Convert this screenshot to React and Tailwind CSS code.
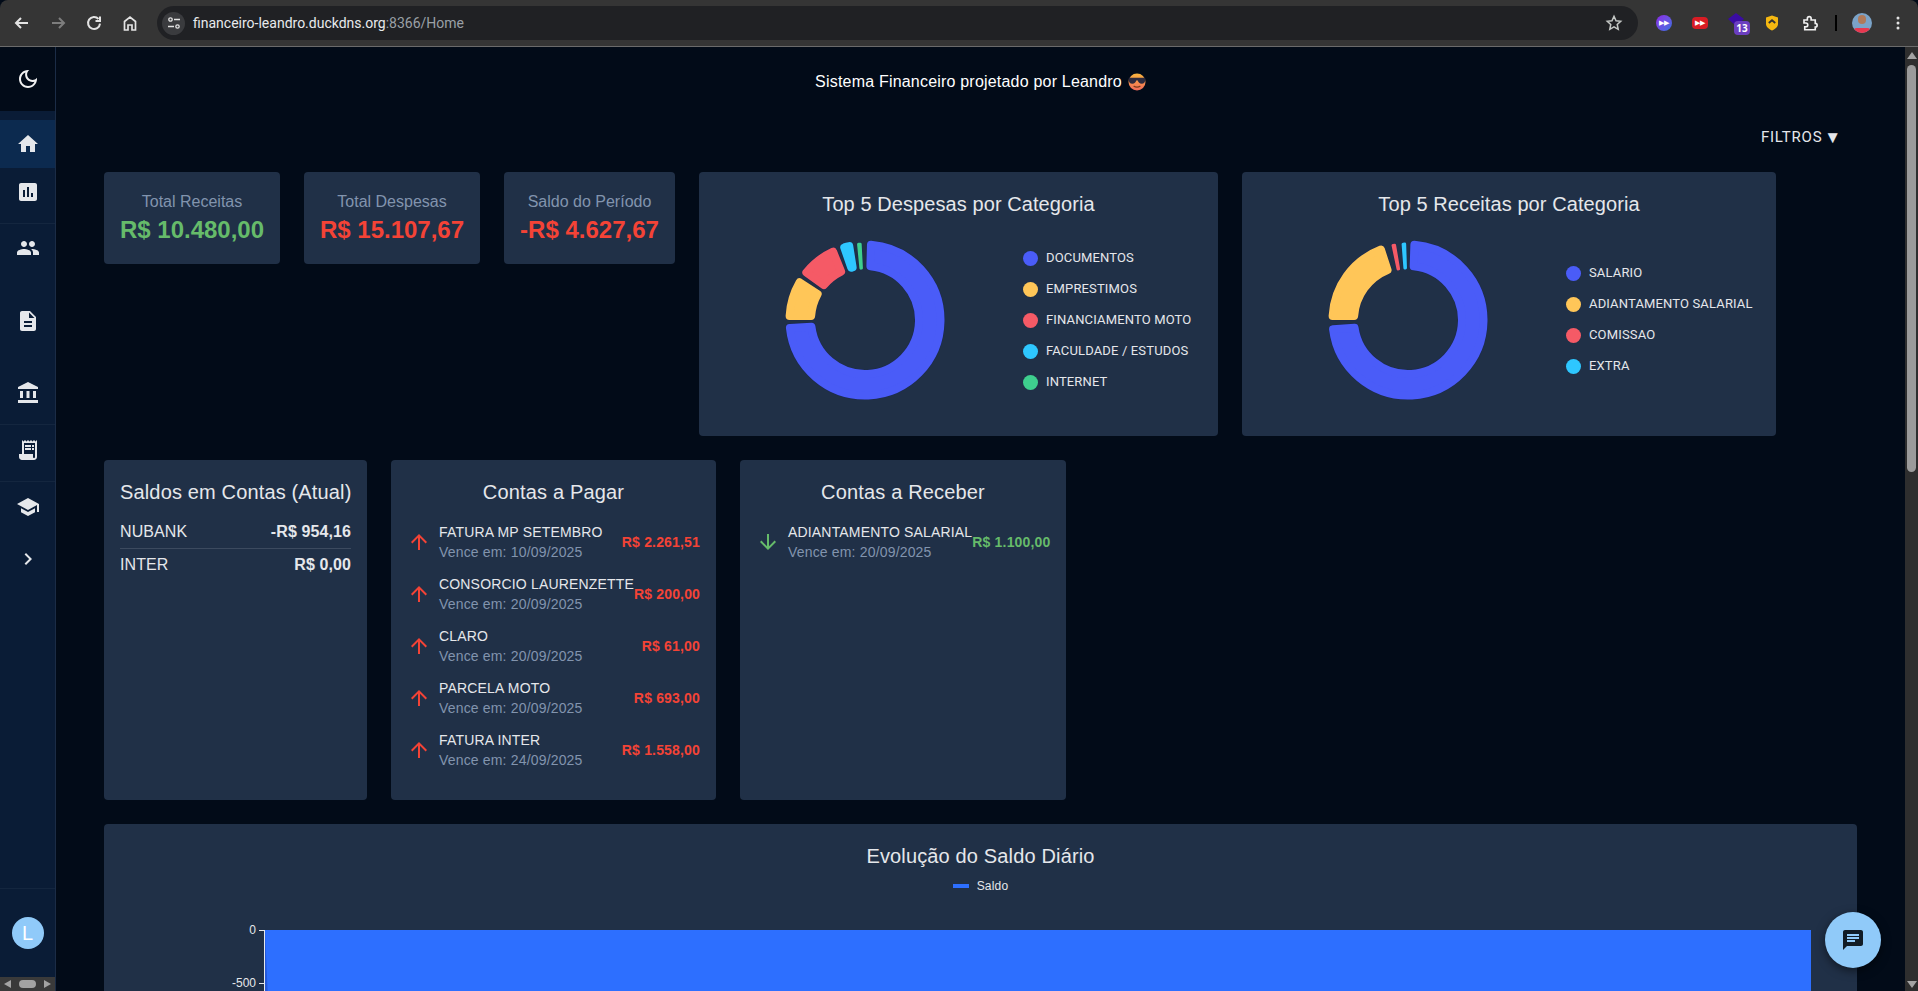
import React from "react";

const arial = { fontFamily: '"Liberation Sans", Arial, sans-serif' };

function P(r, a) {
  const t = ((a - 90) * Math.PI) / 180;
  return [r * Math.cos(t), r * Math.sin(t)];
}
function sector(rO, rI, a0, a1) {
  const c = 4;
  const ro = rO - c, ri = rI + c;
  const dO = (c / ro) * 57.3, dI = (c / ri) * 57.3;
  const mid = (a0 + a1) / 2;
  const s0 = Math.min(a0 + dO, mid), s1 = Math.max(a1 - dO, mid);
  const i0 = Math.min(a0 + dI, mid), i1 = Math.max(a1 - dI, mid);
  const [x1, y1] = P(ro, s0), [x2, y2] = P(ro, s1), [x3, y3] = P(ri, i1), [x4, y4] = P(ri, i0);
  const big = s1 - s0 > 180 ? 1 : 0, bigI = i1 - i0 > 180 ? 1 : 0;
  return `M${x1} ${y1}A${ro} ${ro} 0 ${big} 1 ${x2} ${y2}L${x3} ${y3}A${ri} ${ri} 0 ${bigI} 0 ${x4} ${y4}Z`;
}

function Donut({ segs }) {
  return (
    <svg width="162" height="162" viewBox="-81 -81 162 162" className="shrink-0">
      {segs.map(([a0, a1, c], i) => {
        const thin = a1 - a0 < 6;
        const d = thin
          ? `M${P(76, (a0 + a1) / 2 - 0.6).join(" ")}L${P(76, (a0 + a1) / 2 + 0.6).join(" ")}L${P(52, (a0 + a1) / 2 + 0.3).join(" ")}L${P(52, (a0 + a1) / 2 - 0.3).join(" ")}Z`
          : sector(79.5, 50, a0, a1);
        const w = thin ? 3 : 8;
        return (
          <g key={i}>
            <path d={d} fill="#1c2a4f" stroke="#1c2a4f" strokeWidth={w + 1} strokeLinejoin="round" />
            <path d={d} fill={c} stroke={c} strokeWidth={w} strokeLinejoin="round" />
          </g>
        );
      })}
    </svg>
  );
}

const BLUE = "#4a5cf8", YEL = "#ffc658", RED = "#f55a66", CY = "#2ec7ff", GR = "#3ecf8e";

function Legend({ items }) {
  return (
    <div className="flex flex-col gap-[11px]" style={{ fontFamily: "Roboto, sans-serif" }}>
      {items.map(([t, c]) => (
        <div key={t} className="flex h-5 items-center text-[13px] font-normal tracking-[0.15px] text-[#e5e7eb] whitespace-nowrap">
          <span className="mr-2 h-[15px] w-[15px] rounded-full" style={{ background: c }} />
          {t}
        </div>
      ))}
    </div>
  );
}

function Stat({ label, value, color, w }) {
  return (
    <div className={`flex h-[92px] flex-col items-center justify-center rounded bg-[#203047] ${w}`}>
      <div className="text-base leading-6 text-[#8294ae]">{label}</div>
      <div className={`text-2xl font-bold leading-8 ${color}`}>{value}</div>
    </div>
  );
}

const Arrow = ({ down }) => (
  <svg width="24" height="24" viewBox="0 0 24 24" className={down ? "shrink-0 fill-[#66bb6a]" : "shrink-0 fill-[#f44336]"}>
    {down ? (
      <path d="m20 12-1.41-1.41L13 16.17V4h-2v12.17l-5.58-5.59L4 12l8 8z" />
    ) : (
      <path d="m4 12 1.41 1.41L11 7.83V20h2V7.83l5.58 5.59L20 12l-8-8z" />
    )}
  </svg>
);

function Bill({ name, due, value, down }) {
  return (
    <div className="flex h-[52px] items-center tracking-[0.17px]">
      <div className="w-8 shrink-0">
        <Arrow down={down} />
      </div>
      <div className="flex-1 whitespace-nowrap text-sm leading-5">
        <div className="text-[#e5e7eb]">{name}</div>
        <div className="text-[#8294ae]">Vence em: {due}</div>
      </div>
      <div className={`whitespace-nowrap text-sm font-bold ${down ? "text-[#66bb6a]" : "text-[#f44336]"}`}>{value}</div>
    </div>
  );
}

const Mui = ({ d, className = "" }) => (
  <svg width="24" height="24" viewBox="0 0 24 24" className={`fill-[#e5e7eb] ${className}`}>
    <path d={d} />
  </svg>
);

const icons = {
  home: "M10 20v-6h4v6h5v-8h3L12 3 2 12h3v8z",
  chart: "M19 3H5c-1.1 0-2 .9-2 2v14c0 1.1.9 2 2 2h14c1.1 0 2-.9 2-2V5c0-1.1-.9-2-2-2M9 17H7v-7h2zm4 0h-2V7h2zm4 0h-2v-4h2z",
  people: "M16 11c1.66 0 2.99-1.34 2.99-3S17.66 5 16 5s-3 1.34-3 3 1.34 3 3 3m-8 0c1.66 0 2.99-1.34 2.99-3S9.66 5 8 5 5 6.34 5 8s1.34 3 3 3m0 2c-2.33 0-7 1.17-7 3.5V19h14v-2.5c0-2.33-4.67-3.5-7-3.5m8 0c-.29 0-.62.02-.97.05 1.16.84 1.97 1.97 1.97 3.45V19h6v-2.5c0-2.33-4.67-3.5-7-3.5",
  doc: "M14 2H6c-1.1 0-1.99.9-1.99 2L4 20c0 1.1.89 2 1.99 2H18c1.1 0 2-.9 2-2V8zm2 16H8v-2h8zm0-4H8v-2h8zm-3-5V3.5L18.5 9z",
  bank: "M4 10h3v7H4zm6.5 0h3v7h-3zM2 19h20v3H2zm15-9h3v7h-3zm-5-9L2 6v2h20V6z",
  receipt: "M19.5 3.5 18 2l-1.5 1.5L15 2l-1.5 1.5L12 2l-1.5 1.5L9 2 7.5 3.5 6 2v14H3v3c0 1.66 1.34 3 3 3h12c1.66 0 3-1.34 3-3V2zM19 19c0 .55-.45 1-1 1s-1-.45-1-1v-3H8V5h11zM9 7h6v2H9zm7 0h2v2h-2zm-7 3h6v2H9zm7 0h2v2h-2z",
  school: "M5 13.18v4L12 21l7-3.82v-4L12 17zM12 3 1 9l11 6 9-4.91V17h2V9z",
  chevron: "M10 6 8.59 7.41 13.17 12l-4.58 4.59L10 18l6-6z",
  chat: "M20 2H4c-1.1 0-1.99.9-1.99 2L2 22l4-4h14c1.1 0 2-.9 2-2V4c0-1.1-.9-2-2-2M6 9h12v2H6zm8 5H6v-2h8zm4-6H6V6h12z",
  moon: "M9.37 5.51c-.18.64-.27 1.31-.27 1.99 0 4.08 3.32 7.4 7.4 7.4.68 0 1.35-.09 1.99-.27C17.45 17.19 14.93 19 12 19c-3.86 0-7-3.14-7-7 0-2.93 1.81-5.45 4.37-6.49M12 3c-4.97 0-9 4.03-9 9s4.03 9 9 9 9-4.03 9-9c0-.46-.04-.92-.1-1.36-.98 1.37-2.58 2.26-4.4 2.26-2.98 0-5.4-2.42-5.4-5.4 0-1.81.89-3.42 2.26-4.4-.44-.06-.9-.1-1.36-.1",
};

function NavItem({ icon, h, active, divider }) {
  return (
    <div className={`flex shrink-0 items-center justify-center ${h} ${active ? "bg-[#0c2a4f]" : ""} ${divider ? "border-b border-[#14263f]" : ""}`}>
      <Mui d={icons[icon]} />
    </div>
  );
}

function Toolbar() {
  return (
    <div className="flex h-[47px] shrink-0 items-center rounded-t-[8px] border-b border-[#6b6b6b] bg-[#353535]">
      <svg width="157" height="24" viewBox="0 0 157 24" fill="none" strokeWidth="2" className="shrink-0">
        <path d="M28 12H16m5-5-5 5 5 5" stroke="#e3e3e3" />
        <path d="M52 12h12m-5-5 5 5-5 5" stroke="#7d7d7d" />
        <path d="M98.500 8A6 6 0 1 0 100 12.600" stroke="#e3e3e3" />
        <path d="M100 5.500V10h-4.500" stroke="#e3e3e3" />
        <path d="M124.500 19v-8.500L130 6l5.500 4.500V19h-3.500v-5h-4v5z" stroke="#e3e3e3" strokeWidth="1.700" />
      </svg>
      <div className="flex h-[34px] flex-1 items-center rounded-full bg-[#202124] pl-[5px] pr-[15px]">
        <div className="flex h-[23px] w-[23px] items-center justify-center rounded-full bg-[#3a3b3e]">
          <svg width="14" height="14" viewBox="0 0 14 14" fill="none" stroke="#e3e3e3" strokeWidth="1.300">
            <circle cx="3.500" cy="3.500" r="1.700" />
            <path d="M7 3.500h6M1 10.500h6" />
            <circle cx="10.500" cy="10.500" r="1.700" />
          </svg>
        </div>
        <div className="ml-[8px] flex-1 text-sm text-[#e8eaed]" style={{ fontFamily: "Roboto, sans-serif" }}>
          financeiro-leandro.duckdns.org<span className="text-[#9aa0a6]">:8366/Home</span>
        </div>
        <svg width="18" height="18" viewBox="0 0 24 24" fill="none" stroke="#c4c7c5" strokeWidth="2">
          <path d="m12 3 2.700 6 6.300.7-4.700 4.300 1.300 6.400L12 17.100l-5.600 3.300 1.300-6.400L3 9.700 9.300 9z" />
        </svg>
      </div>
      <div className="flex w-[280px] shrink-0 items-center" style={{ fontFamily: '"Noto Sans", sans-serif' }}>
        <span className="ml-[18px] flex h-4 w-4 items-center justify-center rounded-full bg-gradient-to-br from-[#8a1ee6] to-[#2b6fe0] text-[7px] text-white">▶▶</span>
        <span className="ml-[20px] flex h-3 w-4 items-center justify-center rounded bg-[#d81c24] text-[7px] text-white">▶▶</span>
        <span className="relative ml-[20px] h-4 w-[22px] -translate-y-[2px]">
          <svg width="16" height="14" viewBox="0 0 16 14" className="absolute left-0 top-0"><path d="M8 0l8 6-8 7-8-7z" fill="#3a0ca3" /></svg>
          <span className="absolute left-[6px] top-[8px] flex h-[14px] w-4 items-center justify-center rounded bg-[#6b3ec0] text-[10px] font-bold text-white">13</span>
        </span>
        <svg width="12" height="16" viewBox="0 0 13 16" className="ml-[16px]">
          <path d="M6.500 0 13 2v7c0 3-3 5.500-6.500 7C3 14.500 0 12 0 9V2z" fill="#f5b811" />
          <path d="M3 8l3.500-3L10 8" stroke="#333" strokeWidth="2" fill="none" />
        </svg>
        <svg width="18" height="18" viewBox="0 0 24 24" fill="none" stroke="#f1f1f1" strokeWidth="2.200" className="ml-[23px]">
          <path d="M4 8h4.500V6a2.500 2.500 0 0 1 5 0v2H19v4.500a2.500 2.500 0 0 1 0 5V21H5v-4h1.500a2.500 2.500 0 0 0 0-5H4z" />
        </svg>
        <span className="ml-[16px] h-4 w-[2px] bg-black" />
        <span className="relative ml-[15px] h-5 w-5 overflow-hidden rounded-full bg-[#7ba3c8]">
          <span className="absolute left-[6px] top-[2px] h-[9px] w-2 rounded-full bg-[#b07a5a]" />
          <span className="absolute bottom-[-3px] left-[1px] h-2 w-[18px] rounded-full bg-[#e8384f]" />
        </span>
        <svg width="4" height="14" viewBox="0 0 4 14" fill="#e3e3e3" className="ml-[24px]">
          <circle cx="2" cy="2" r="1.500" /><circle cx="2" cy="7" r="1.500" /><circle cx="2" cy="12" r="1.500" />
        </svg>
      </div>
    </div>
  );
}

function Emoji() {
  return (
    <svg width="18" height="18" viewBox="0 0 18 18" className="ml-[6px] inline-block align-[-4px]">
      <defs>
        <linearGradient id="emj" x1="0" y1="0" x2="0" y2="1">
          <stop offset="0" stopColor="#f9b53e" />
          <stop offset="1" stopColor="#f26a5a" />
        </linearGradient>
      </defs>
      <circle cx="9" cy="9" r="8.500" fill="url(#emj)" />
      <path d="M0.800 4.800h16.400v2c0 2.400-1.300 4-3.400 4S10.200 9.500 9.800 7.600h-1.600c-.4 1.900-1.600 3.200-3.900 3.200S0.800 9.200 0.800 6.800z" fill="#2d2a3e" />
      <path d="M6 13.300c1.500 1.200 4.500 1.200 6 0" stroke="#7a3b1c" strokeWidth="1.200" fill="none" strokeLinecap="round" />
    </svg>
  );
}

export default function App() {
  return (
    <div className="flex h-[991px] w-[1918px] flex-col overflow-hidden bg-[#020b18]" style={arial}>
      <Toolbar />
      <div className="flex min-h-0 flex-1">
        <aside className="flex w-[56px] shrink-0 flex-col border-r border-[#1b2c46] bg-[#0a1c36]">
          <div className="flex h-[64px] shrink-0 items-center justify-center bg-[#020b18]">
            <svg width="24" height="24" viewBox="0 0 24 24" fill="#f2f2f2"><path d={icons.moon} /></svg>
          </div>
          <div className="h-[9px] shrink-0" />
          <NavItem icon="home" h="h-[48px]" active />
          <NavItem icon="chart" h="h-[56px] pb-2" divider />
          <NavItem icon="people" h="h-[48px]" />
          <NavItem icon="doc" h="h-[96px] pt-[2px]" />
          <NavItem icon="bank" h="h-[57px] pb-[7px]" divider />
          <NavItem icon="receipt" h="h-[57px] pb-[7px]" divider />
          <NavItem icon="school" h="h-[50px]" />
          <NavItem icon="chevron" h="h-[54px]" />
          <div className="flex-1 border-b border-[#14263f]" />
          <div className="flex h-[88px] shrink-0 items-start justify-center pt-[28px]">
            <div className="flex h-8 w-8 items-center justify-center rounded-full bg-[#90caf9] text-xl text-white">L</div>
          </div>
          <div className="flex h-[14px] shrink-0 items-center justify-between bg-[#3a3a3a] px-1">
            <span className="h-0 w-0 border-y-[4px] border-r-[7px] border-y-transparent border-r-[#a3a3a3]" />
            <span className="h-2 w-[17px] rounded-full bg-[#a3a3a3]" />
            <span className="h-0 w-0 border-y-[4px] border-l-[7px] border-y-transparent border-l-[#a3a3a3]" />
          </div>
        </aside>

        <main className="relative min-w-0 flex-1 overflow-hidden pl-[48px]">
          <div className="flex h-[70px] items-center justify-center text-base tracking-[0.2px] text-white">
            <span className="ml-[-48px]">Sistema Financeiro projetado por Leandro<Emoji /></span>
          </div>
          <div className="flex h-[55px] items-center justify-end pb-[15px] pr-[63px] text-[15px] tracking-[0.8px] text-[#e5e7eb]" style={{ fontFamily: "Roboto, sans-serif" }}>
            FILTROS<span className="ml-[2px] text-[17px] leading-none">▼</span>
          </div>

          <div className="flex items-start gap-6">
            <Stat label="Total Receitas" value="R$ 10.480,00" color="text-[#66bb6a]" w="w-[176px]" />
            <Stat label="Total Despesas" value="R$ 15.107,67" color="text-[#f44336]" w="w-[176px]" />
            <Stat label="Saldo do Período" value="-R$ 4.627,67" color="text-[#f44336]" w="w-[171px]" />
            <section className="h-[264px] w-[519px] rounded bg-[#203047] pt-4 text-[#e5e7eb]">
              <h2 className="text-center text-xl leading-8 tracking-[0.08px]">Top 5 Despesas por Categoria</h2>
              <div className="mt-[19px] flex items-center pl-[85px]">
                <Donut segs={[[1.500, 267, BLUE], [270, 303, YEL], [306, 338, RED], [341, 351, CY], [353.500, 358, GR]]} />
                <div className="ml-[77px]"><Legend items={[["DOCUMENTOS", BLUE], ["EMPRESTIMOS", YEL], ["FINANCIAMENTO MOTO", RED], ["FACULDADE / ESTUDOS", CY], ["INTERNET", GR]]} /></div>
              </div>
            </section>
            <section className="h-[264px] w-[534px] rounded bg-[#203047] pt-4 text-[#e5e7eb]">
              <h2 className="text-center text-xl leading-8 tracking-[0.08px]">Top 5 Receitas por Categoria</h2>
              <div className="mt-[19px] flex items-center pl-[85px]">
                <Donut segs={[[1.800, 266, BLUE], [270, 342, YEL], [347, 351.500, RED], [355.200, 358.600, CY]]} />
                <div className="ml-[77px] mt-[-1px]"><Legend items={[["SALARIO", BLUE], ["ADIANTAMENTO SALARIAL", YEL], ["COMISSAO", RED], ["EXTRA", CY]]} /></div>
              </div>
            </section>
          </div>

          <div className="mt-6 flex items-start gap-6">
            <section className="h-[340px] w-[263px] rounded bg-[#203047] px-4 pt-4 text-[#e5e7eb]">
              <h2 className="text-xl leading-8 tracking-[0.15px] whitespace-nowrap">Saldos em Contas (Atual)</h2>
              <div className="mt-[8px] flex h-[33px] items-center justify-between border-b border-[#3c4a5f] tracking-[0.1px]">
                <span>NUBANK</span>
                <span className="font-bold">-R$ 954,16</span>
              </div>
              <div className="flex h-[32px] items-center justify-between tracking-[0.1px]">
                <span>INTER</span>
                <span className="font-bold">R$ 0,00</span>
              </div>
            </section>
            <section className="h-[340px] w-[325px] rounded bg-[#203047] px-4 pt-4 text-[#e5e7eb]">
              <h2 className="mb-[8px] text-center text-xl leading-8 tracking-[0.17px]">Contas a Pagar</h2>
              <Bill name="FATURA MP SETEMBRO" due="10/09/2025" value="R$ 2.261,51" />
              <Bill name="CONSORCIO LAURENZETTE" due="20/09/2025" value="R$ 200,00" />
              <Bill name="CLARO" due="20/09/2025" value="R$ 61,00" />
              <Bill name="PARCELA MOTO" due="20/09/2025" value="R$ 693,00" />
              <Bill name="FATURA INTER" due="24/09/2025" value="R$ 1.558,00" />
            </section>
            <section className="h-[340px] w-[326px] rounded bg-[#203047] px-4 pt-4 text-[#e5e7eb]">
              <h2 className="mb-[8px] text-center text-xl leading-8 tracking-[0.17px]">Contas a Receber</h2>
              <Bill name="ADIANTAMENTO SALARIAL" due="20/09/2025" value="R$ 1.100,00" down />
            </section>
          </div>

          <section className="mt-6 h-[300px] w-[1753px] rounded-t bg-[#203047] pt-4 text-[#e5e7eb]">
            <h2 className="text-center text-xl leading-8 tracking-[0.15px]">Evolução do Saldo Diário</h2>
            <div className="mt-[6px] flex items-center justify-center text-xs leading-4 tracking-[0.2px]">
              <span className="mr-2 h-1 w-4 bg-[#2d6fff]" />
              Saldo
            </div>
            <div className="relative mt-[36px]">
              <svg width="1753" height="70" viewBox="0 0 1753 70" className="block">
                <rect x="161" y="0" width="1546" height="70" fill="#2d6fff" />
                <path d="M161 0v70h3z" fill="#2458d8" />
                <path d="M160.500 0v70M155 0.500h6M155 53.500h6" stroke="#e5e7eb" fill="none" />
              </svg>
              <span className="absolute left-[120px] top-[-10px] w-[32px] text-right text-xs leading-5 text-[#e5e7eb]">0</span>
              <span className="absolute left-[120px] top-[43px] w-[32px] text-right text-xs leading-5 text-[#e5e7eb]">-500</span>
            </div>
          </section>

          <button className="absolute bottom-[23px] right-[24px] flex h-14 w-14 items-center justify-center rounded-full bg-[#90caf9] shadow-[0_3px_10px_rgba(0,0,0,0.5)]">
            <svg width="24" height="24" viewBox="0 0 24 24" fill="#111c26"><path d={icons.chat} /></svg>
          </button>
        </main>

        <div className="flex w-[13px] shrink-0 flex-col items-center bg-[#2e2e2e]">
          <span className="mt-[5px] h-0 w-0 border-x-[5px] border-b-[7px] border-x-transparent border-b-[#a3a3a3]" />
          <span className="mt-[6px] h-[407px] w-[9px] rounded-full bg-[#9b9b9b]" />
          <span className="mb-[3px] mt-auto h-0 w-0 border-x-[5px] border-t-[7px] border-x-transparent border-t-[#a3a3a3]" />
        </div>
      </div>
    </div>
  );
}
